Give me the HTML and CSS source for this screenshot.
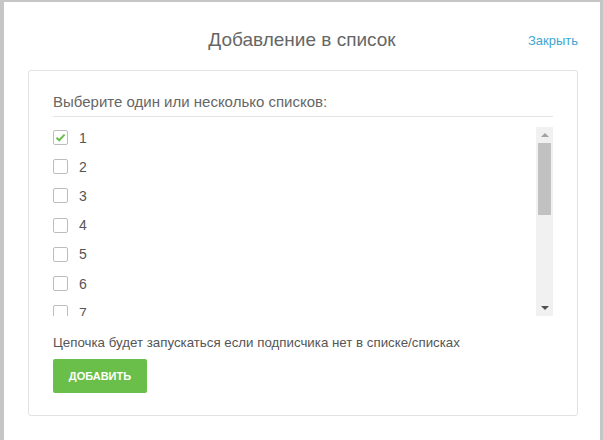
FILE: index.html
```html
<!DOCTYPE html>
<html lang="ru">
<head>
<meta charset="utf-8">
<title>Добавление в список</title>
<link rel="stylesheet" href="styles.css">
</head>
<body>
<div class="modal">
  <header class="modal-header">
    <h1 class="modal-title">Добавление в список</h1>
    <a class="close-link" href="#">Закрыть</a>
  </header>
  <section class="card">
    <div class="card-label">Выберите один или несколько списков:</div>
    <div class="list-box">
      <ul class="list">
        <li class="row"><span class="check checked"><svg viewBox="0 0 15 15" width="15" height="15"><path d="M3.5 7.8 L6.2 10.3 L11.6 4.6" fill="none" stroke="#6abf4b" stroke-width="2"/></svg></span><span class="num">1</span></li>
        <li class="row"><span class="check"></span><span class="num">2</span></li>
        <li class="row"><span class="check"></span><span class="num">3</span></li>
        <li class="row"><span class="check"></span><span class="num">4</span></li>
        <li class="row"><span class="check"></span><span class="num">5</span></li>
        <li class="row"><span class="check"></span><span class="num">6</span></li>
        <li class="row"><span class="check"></span><span class="num">7</span></li>
      </ul>
      <div class="scrollbar">
        <span class="arrow arrow-up"></span>
        <span class="thumb"></span>
        <span class="track"></span>
        <span class="arrow arrow-down"></span>
      </div>
    </div>
    <p class="hint">Цепочка будет запускаться если подписчика нет в списке/списках</p>
    <button class="btn-add" type="button">ДОБАВИТЬ</button>
  </section>
</div>
</body>
</html>
```
FILE: styles.css
```css
html, body {
  margin: 0;
  height: 100%;
}
body {
  background: #c6c6c6;
  font-family: "Liberation Sans", Arial, sans-serif;
  padding: 2px 3px 0 4px;
  box-sizing: border-box;
}
.modal {
  background: #fff;
  height: 100%;
  display: flex;
  flex-direction: column;
}
.modal-header {
  height: 68px;
  display: flex;
  align-items: center;
  justify-content: center;
  position: relative;
  padding-top: 8px;
  box-sizing: border-box;
}
.modal-title {
  margin: 0;
  font-weight: normal;
  font-size: 19px;
  color: #666;
}
.close-link {
  position: absolute;
  right: 22px;
  top: 31px;
  font-size: 13px;
  color: #3ea6d1;
  text-decoration: none;
}
.card {
  margin: 0 22px 0 24px;
  border: 1px solid #e2e2e2;
  border-radius: 3px;
  padding: 21px 24px 22px 24px;
}
.card-label {
  font-size: 15px;
  line-height: 20px;
  color: #666;
  padding-bottom: 4px;
  border-bottom: 1px solid #e4e4e4;
}
.list-box {
  margin-top: 9px;
  height: 190px;
  display: flex;
  overflow: hidden;
}
.list {
  list-style: none;
  margin: -3px 0 0 0;
  padding: 0;
  flex: 1;
}
.row {
  height: 29.2px;
  display: flex;
  align-items: center;
}
.check {
  width: 15px;
  height: 15px;
  border: 1px solid #bdbdbd;
  border-radius: 2px;
  box-sizing: border-box;
  display: flex;
  align-items: center;
  justify-content: center;
}
.check svg {
  display: block;
  flex: none;
}
.num {
  margin-left: 11px;
  font-size: 14px;
  line-height: 16px;
  color: #555;
}
.scrollbar {
  width: 17px;
  background: #f1f1f1;
  display: flex;
  flex-direction: column;
  align-items: center;
  margin-top: 1px;
}
.arrow {
  width: 0;
  height: 0;
  border-left: 4px solid transparent;
  border-right: 4px solid transparent;
}
.arrow-up {
  margin-top: 6px;
  border-bottom: 4px solid #a3a3a3;
}
.thumb {
  margin-top: 6px;
  width: 13px;
  height: 72px;
  background: #c1c1c1;
}
.track {
  flex: 1;
}
.arrow-down {
  margin-bottom: 6px;
  border-top: 4px solid #505050;
}
.hint {
  margin: 18px 0 0 0;
  font-size: 13.3px;
  line-height: 18px;
  color: #555;
}
.btn-add {
  margin-top: 7px;
  display: block;
  width: 94px;
  height: 34px;
  border: none;
  border-radius: 2px;
  background: #6abf4b;
  color: #fff;
  font-family: "Liberation Sans", Arial, sans-serif;
  font-weight: bold;
  font-size: 11px;
  padding: 0;
}
```
